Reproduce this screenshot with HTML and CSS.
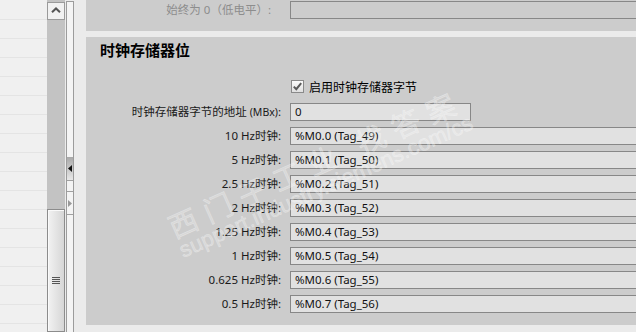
FILE: index.html
```html
<!DOCTYPE html>
<html lang="zh-CN">
<head>
<meta charset="utf-8">
<title>时钟存储器位</title>
<link rel="stylesheet" href="styles.css">
</head>
<body>
<div class="app">
  <div class="tree"></div>
  <div class="vscroll">
    <div class="sb-btn">
      <svg width="10" height="6" viewBox="0 0 10 6"><polyline points="1,5.2 5,1.4 9,5.2" fill="none" stroke="#555" stroke-width="2"/></svg>
    </div>
    <div class="sb-track"></div>
    <div class="sb-thumb"><span class="grip"></span></div>
  </div>
  <div class="splitter">
    <div class="sp-btn active">
      <svg width="4" height="7" viewBox="0 0 4 7"><polygon points="4,0 4,7 0,3.5" fill="#111"/></svg>
    </div>
    <div class="sp-sep"></div>
    <div class="sp-btn">
      <svg width="4" height="7" viewBox="0 0 4 7"><polygon points="0,0 0,7 4,3.5" fill="#999"/></svg>
    </div>
  </div>
  <main class="content">
    <section class="panel panel-top">
      <div class="grid">
        <span class="lbl dim">始终为 0（低电平）:</span>
        <div class="field disabled"></div>
      </div>
    </section>
    <section class="panel panel-clock">
      <h2 class="title">时钟存储器位</h2>
      <div class="grid">
        <span></span>
        <label class="check">
          <svg class="cb" width="13" height="13" viewBox="0 0 13 13">
            <defs><linearGradient id="cbg" x1="0" y1="0" x2="0" y2="1"><stop offset="0" stop-color="#fdfdfd"/><stop offset="1" stop-color="#dedede"/></linearGradient></defs>
            <rect x="0.5" y="0.5" width="12" height="12" fill="url(#cbg)" stroke="#8a8a8a"/>
            <polyline points="2.8,6.6 5.3,9.2 10.2,3.2" fill="none" stroke="#5a5a5a" stroke-width="2"/>
          </svg>
          <span>启用时钟存储器字节</span>
        </label>
        <span class="lbl">时钟存储器字节的地址 <small>(MBx)</small>:</span>
        <div class="field short">0</div>
        <span class="lbl">10 Hz时钟:</span><div class="field">%M0.0 (Tag_49)</div>
        <span class="lbl">5 Hz时钟:</span><div class="field">%M0.1 (Tag_50)</div>
        <span class="lbl">2.5 Hz时钟:</span><div class="field">%M0.2 (Tag_51)</div>
        <span class="lbl">2 Hz时钟:</span><div class="field">%M0.3 (Tag_52)</div>
        <span class="lbl">1.25 Hz时钟:</span><div class="field">%M0.4 (Tag_53)</div>
        <span class="lbl">1 Hz时钟:</span><div class="field">%M0.5 (Tag_54)</div>
        <span class="lbl">0.625 Hz时钟:</span><div class="field">%M0.6 (Tag_55)</div>
        <span class="lbl">0.5 Hz时钟:</span><div class="field">%M0.7 (Tag_56)</div>
      </div>
    </section>
    <div class="watermark">
      <div class="wm-cn">西门子工业 找答案</div>
      <div class="wm-url">support.industry.siemens.com/cs</div>
    </div>
  </main>
</div>
</body>
</html>
```
FILE: styles.css
```css
* { box-sizing: border-box; }
html, body { margin: 0; padding: 0; }
body {
  width: 636px;
  height: 332px;
  overflow: hidden;
  background: #ebebeb;
  font-family: "Noto Sans CJK SC", "Liberation Sans", sans-serif;
  font-size: 12px;
  color: #1a1a1a;
}
.app {
  display: flex;
  height: 332px;
}
.tree {
  width: 47px;
  flex: none;
  background-color: #f0f0f0;
  background-image: repeating-linear-gradient(to bottom, transparent 0 18px, #e4e4e4 18px 19px);
  background-position: 0 1px;
}
.vscroll {
  width: 18px;
  flex: none;
  background: #c3c3c3;
  display: flex;
  flex-direction: column;
  margin-right: 1px;
}
.sb-btn {
  margin-top: 2px;
  height: 18px;
  border: 1px solid #9a9a9a;
  background: #f1f1f1;
  display: flex;
  align-items: center;
  justify-content: center;
}
.sb-btn svg { display: block; margin-top: -2px; }
.sb-track { height: 189px; flex: none; }
.sb-thumb {
  flex: 1;
  border: 1px solid #8c8c8c;
  box-shadow: inset 1px 1px 0 #fafafa;
  background: linear-gradient(to right, #f2f2f2, #d6d6d6);
  padding-top: 67px;
}
.grip {
  display: block;
  width: 8px;
  height: 7px;
  margin: 0 auto;
  background: repeating-linear-gradient(to bottom, #555 0 1px, transparent 1px 2px);
}
.splitter {
  width: 8px;
  flex: none;
  margin-top: 1px;
  border: 1px solid #9c9c9c;
  border-bottom: none;
  background: #f4f4f4;
  padding-top: 155px;
  margin-right: 12px;
}
.sp-btn {
  height: 24px;
  border-bottom: 1px solid #a0a0a0;
  display: flex;
  align-items: center;
  justify-content: center;
}
.sp-btn.active {
  background: linear-gradient(to bottom, #a8a8a8, #e8e8e8);
}
.sp-btn svg { display: block; }
.sp-sep {
  height: 11px;
  border-bottom: 1px solid #a0a0a0;
}
.sp-btn:last-child { height: 23px; }

.content {
  flex: 1;
  position: relative;
  overflow: hidden;
}
.panel { background: #cccccc; }
.panel-top {
  height: 31px;
  padding-top: 1px;
  margin-bottom: 6px;
}
.panel-clock {
  padding: 3px 0 12px 0;
}
.title {
  margin: 0 0 19px 0;
  padding-left: 14px;
  font-size: 15px;
  font-weight: bold;
  line-height: 20px;
  color: #000;
}
.grid {
  display: grid;
  grid-template-columns: 195px 1fr;
  grid-auto-rows: 18px;
  column-gap: 9px;
  row-gap: 6px;
}
.lbl, .field {
  font-family: "Noto Sans", "Noto Sans CJK SC", sans-serif;
  font-size: 11.5px;
}
.lbl {
  text-align: right;
  line-height: 18px;
  white-space: nowrap;
}
.lbl small { font-size: 10.5px; }
.lbl.dim { color: #8d8d8d; padding-right: 10px; }
.field {
  height: 18px;
  border: 1px solid #878787;
  background: #e1e1e1;
  padding: 0 4px;
  line-height: 16px;
  margin-right: -4px;
  white-space: nowrap;
  color: #111;
}
.field.disabled { background: #cccccc; }
.field.short { width: 181px; margin-right: 0; }
.check {
  display: flex;
  align-items: flex-start;
  gap: 5px;
  line-height: 15px;
  color: #000;
}
.cb { display: block; margin: 1px 0 0 1px; flex: none; }

.watermark {
  position: absolute;
  left: 54px;
  top: 146px;
  width: 360px;
  transform: rotate(-24deg);
  text-align: center;
  pointer-events: none;
  color: rgba(255, 255, 255, 0.26);
  -webkit-text-stroke: 0.6px rgba(255, 255, 255, 0.32);
}
.wm-cn {
  font-size: 29px;
  letter-spacing: 9px;
  line-height: 30px;
}
.wm-url {
  font-family: "Liberation Sans", sans-serif;
  font-size: 22px;
  line-height: 24px;
}
```
